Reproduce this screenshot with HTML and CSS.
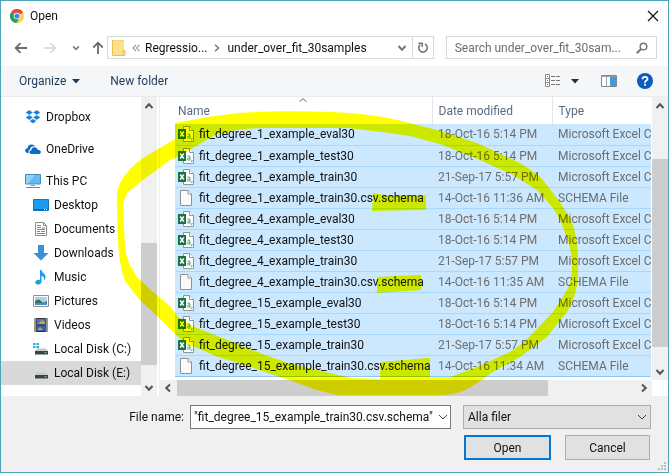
FILE: index.html
```html
<!DOCTYPE html>
<html lang="en">
<head>
<meta charset="utf-8">
<title>Open</title>
<link rel="stylesheet" href="styles.css">
</head>
<body>
<svg class="defs" aria-hidden="true">
  <symbol id="excel" viewBox="0 0 16 16">
    <path d="M5.500.5h6l4 4v11h-10z" fill="#fff" stroke="#8d9a93"/>
    <path d="M11.500.5v4h4" fill="#fff" stroke="#8d9a93"/>
    <path d="M0 3h8v10H0z" fill="#1e7145"/>
    <path d="M2.200 5.500l3.600 5M5.800 5.500l-3.600 5" stroke="#fff" stroke-width="1.500"/>
    <path d="M9.500 8.200q2.500-1 2.500 1v3.300M12 9.900q-3 0-2.700 1.600.8 1.600 2.700 0M14 12v1l-.8 1" fill="none" stroke="#5aa377"/>
  </symbol>
  <symbol id="blank" viewBox="0 0 16 16">
    <path d="M2.500.5h7.500l3.500 3.500v11.500h-11z" fill="#fafafa" stroke="#929292"/>
    <path d="M10 .5v3.500h3.500" fill="#fff" stroke="#929292"/>
  </symbol>
  <symbol id="chev" viewBox="0 0 10 10"><path d="M1.500 3 5 6.800 8.500 3" fill="none" stroke="currentColor" stroke-width="2"/></symbol>
</svg>
<div class="window">
  <header class="titlebar">
    <svg width="14" height="14" viewBox="0 0 14 14">
      <circle cx="7" cy="7" r="7" fill="#ffd23f"/>
      <path d="M7 7 .9 3.500A7 7 0 0 1 13.100 3.500z" fill="#dd4b3e"/>
      <path d="M7 7 .9 3.500A7 7 0 0 0 6.500 14L9.500 8.500z" fill="#23a05a"/>
      <circle cx="7" cy="7" r="3.300" fill="#fff"/><circle cx="7" cy="7" r="2.600" fill="#4285f4"/>
    </svg>
    <h1>Open</h1>
    <button class="icon-btn close" aria-label="Close"><svg width="12" height="12" viewBox="0 0 12 12"><path d="M1 1l10 10M11 1 1 11" stroke="#111" stroke-width="1.200"/></svg></button>
  </header>

  <nav class="navbar">
    <div class="history">
      <button class="icon-btn" aria-label="Back"><svg width="13" height="12" viewBox="0 0 13 12"><path d="M13 6H2M6.500 1.200 1.700 6l4.800 4.800" fill="none" stroke="#6b6b6b" stroke-width="1.800"/></svg></button>
      <button class="icon-btn fwd" aria-label="Forward"><svg width="13" height="12" viewBox="0 0 13 12"><path d="M0 6h11M6.500 1.200 11.300 6l-4.800 4.800" fill="none" stroke="#d5d5d5" stroke-width="1.600"/></svg></button>
      <button class="icon-btn recent" aria-label="Recent locations"><svg width="8" height="8"><use href="#chev"/></svg></button>
      <button class="icon-btn" aria-label="Up"><svg width="12" height="13" viewBox="0 0 12 13"><path d="M6 13V2M1.200 6.500 6 1.700l4.800 4.800" fill="none" stroke="#6b6b6b" stroke-width="1.800"/></svg></button>
    </div>
    <div class="address">
      <svg class="folder" width="14" height="16" viewBox="0 0 14 16"><path d="M1 0h11v11h1v4.500H1z" fill="#ffe391"/><path d="M1 0h11v10.500l-1.500 1V16H1z" fill="#ffe08a"/><path d="M1 .5h11" stroke="#f4d271"/><path d="M.5 0v15.500H13v-5h-2v5" fill="none" stroke="#e8bd52"/></svg>
      <svg width="8" height="8" viewBox="0 0 8 8"><path d="M4 .8.900 4 4 7.200M7.600.8 4.500 4l3.100 3.200" fill="none" stroke="#666"/></svg>
      <button class="crumb first">Regressio...</button>
      <svg class="sep" width="6" height="8" viewBox="0 0 6 8"><path d="M1 .8 4.500 4 1 7.200" fill="none" stroke="#777" stroke-width="1.500"/></svg>
      <button class="crumb">under_over_fit_30samples</button>
      <button class="icon-btn drop" aria-label="Previous locations"><svg width="10" height="10"><use href="#chev"/></svg></button>
      <button class="icon-btn refresh" aria-label="Refresh"><svg width="12" height="12" viewBox="0 0 12 12"><path d="M3.200 2.500A4.300 4.300 0 1 0 8 2" fill="none" stroke="#777" stroke-width="1.600"/><path d="M1.500 1.300h3.700V5" fill="none" stroke="#777" stroke-width="1.500"/></svg></button>
    </div>
    <div class="search">
      <input type="text" aria-label="Search" placeholder="Search under_over_fit_30sam...">
      <svg width="12" height="12" viewBox="0 0 12 12"><circle cx="7.500" cy="4.500" r="3.300" fill="none" stroke="#777" stroke-width="1.500"/><path d="M5 7 .8 11.200" stroke="#777" stroke-width="2"/></svg>
    </div>
  </nav>

  <div class="toolbar">
    <button class="tool organize">Organize <svg width="8" height="5"><path d="M0 0h8L4 4.500z" fill="#1e395b"/></svg></button>
    <button class="tool">New folder</button>
    <button class="icon-btn view" aria-label="Change your view"><svg width="16" height="14" viewBox="0 0 16 14"><path d="M.5.5h4v12h-4zM.5 4.500h4M.5 8.500h4" fill="#fff" stroke="#888"/><path d="M2 2.500h1M2 6.500h1M2 10.500h1" stroke="#4b7fae"/><path d="M6 2.500h4M11 2.500h4M6 6.500h4M11 6.500h4M6 10.500h4M11 10.500h4" stroke="#777"/></svg></button>
    <button class="icon-btn more" aria-label="More options"><svg width="8" height="5"><path d="M0 0h8L4 4.500z" fill="#222b45"/></svg></button>
    <button class="icon-btn preview" aria-label="Show the preview pane"><svg width="16" height="12" viewBox="0 0 16 12"><path d="M.5.5h15v11H.5z" fill="#fff" stroke="#7f868c"/><path d="M.5 1.500h15M5.500 1v10" stroke="#9aa0a5"/><path d="M9 2h6v9H9z" fill="#3a9be0"/></svg></button>
    <button class="icon-btn" aria-label="Help"><svg width="16" height="16" viewBox="0 0 16 16"><circle cx="8" cy="8" r="8" fill="#0b5cb8"/><path d="M5.500 6.200Q5.600 3.800 8 3.800t2.500 2.100C10.500 7.600 8 7.600 8 9.700M8 10.800v1.900" fill="none" stroke="#fff" stroke-width="1.800"/></svg></button>
  </div>

  <main class="content">
    <aside class="sidebar">
      <ul class="tree">
        <li class="root"><a href="#"><svg width="16" height="16" viewBox="0 0 16 16"><path d="M4.300 1 .5 3.500 4.300 6 8 3.500zM11.700 1 8 3.500 11.700 6l3.800-2.500zM4.300 6 .5 8.500 4.300 11 8 8.500zM11.700 6 8 8.500l3.700 2.500 3.800-2.500zM8 9.800l-3.500 2.300L8 14.500l3.500-2.400z" fill="#147fe0" stroke="#fff" stroke-width=".3"/></svg>Dropbox</a></li>
        <li class="root"><a href="#"><svg width="16" height="16" viewBox="0 0 16 16"><path d="M2 12Q-.5 11 .4 8.600 1 7.200 2.600 7.200 2.800 4 6 3.500q3-.3 4 1.800-4.500-.8-5.200 3.400Q3 9.500 3.700 12z" fill="#0f6cbd"/><path d="M6 13q-2-.5-1.500-2.300.4-1.200 1.700-1.200Q6.700 6 9.800 6.300q2.300.2 2.900 2.500 3 .1 3.200 2.300-.1 1.900-1.800 1.900z" fill="#0f6cbd"/></svg>OneDrive</a></li>
        <li class="root"><a href="#"><svg width="16" height="16" viewBox="0 0 16 16"><path d="M.5 1.500h15v9.500H.5z" fill="#63b9f5" stroke="#4b87b0"/><path d="M1 2h9L3 10.500H1z" fill="#92d2fb"/><path d="M6 12h4v1H6z" fill="#999"/><path d="M1 14.500h14" stroke="#888"/></svg>This PC</a></li>
        <li><a href="#"><svg width="16" height="16" viewBox="0 0 16 16"><path d="M.5 2.500h15v11H.5z" fill="#1b9cf2" stroke="#1673b8"/><path d="M1 12.500h14" stroke="#0b62a5"/><path d="M11 12.500h3" stroke="#fff" stroke-dasharray="1 1"/></svg>Desktop</a></li>
        <li><a href="#"><svg width="16" height="16" viewBox="0 0 16 16"><path d="M2.500 1.500h8l3 3v10h-11z" fill="#fff" stroke="#8a8a8a"/><path d="M10.500 1.500v3h3" fill="none" stroke="#8a8a8a"/><path d="M4 4.500h4M4 6.500h4M9 7h3M4 8.500h8M4 10.500h3M8 10.500h4M4 12.500h8" stroke="#3f93c8"/></svg>Documents</a></li>
        <li><a href="#"><svg width="16" height="16" viewBox="0 0 16 16"><path d="M5 0h6v8h4.500L8 15.500.5 8H5z" fill="#3c8fdb"/></svg>Downloads</a></li>
        <li><a href="#"><svg width="16" height="16" viewBox="0 0 16 16"><path d="M7 1h1.500c.5 3 4.500 3.500 4 7.500-.2 1.500-.8 2.500-1.500 3.200.8-3-1-4.500-2.500-5v6c0 2-2 3-4 2.800-2.300-.3-3-2-1.700-3.400C4 11 5.500 10.600 7 11z" fill="#1c9de6"/></svg>Music</a></li>
        <li><a href="#"><svg width="16" height="16" viewBox="0 0 16 16"><path d="M.5 2.500h15v11H.5z" fill="#fff" stroke="#909090"/><path d="M2 4h12v8H2z" fill="#a6d4f2"/><path d="M2 8q4-3 6 0t6 0v2H2z" fill="#3c6b70"/><path d="M2 10h12v2H2z" fill="#4a91c2"/></svg>Pictures</a></li>
        <li><a href="#"><svg width="16" height="16" viewBox="0 0 16 16"><path d="M1.500 1h13v14h-13z" fill="#333"/><path d="M4 2h8v5.500H4z" fill="#4476c8"/><path d="M4 8.500h8V14H4z" fill="#2f62b5"/><path d="M5 7l4-4 3 2v2zM4 13l3-3 3 3z" fill="#d3a13c"/><path d="M2.700 1.500v13M13.300 1.500v13" stroke="#fff" stroke-width="1.200" stroke-dasharray="1 1"/></svg>Videos</a></li>
        <li><a href="#"><svg width="16" height="16" viewBox="0 0 16 16"><path d="M0 2h2.500v2H0zM3.500 2H6v2H3.500zM0 5h2.500v2H0zM3.500 5H6v2H3.500z" fill="#1fb4da"/><path d="M4 7.500h8.500L15 10H2z" fill="#c9c9c9"/><path d="M2 10h13v3.500H2z" fill="#3c4247"/><path d="M11.500 11.700h2" stroke="#6cdb7b"/></svg>Local Disk (C:)</a></li>
        <li class="selected"><a href="#"><svg width="16" height="16" viewBox="0 0 16 16"><path d="M4 7.500h8.500L15 10H2z" fill="#c9c9c9"/><path d="M2 10h13v3.500H2z" fill="#3c4247"/><path d="M11.500 11.700h2" stroke="#6cdb7b"/></svg>Local Disk (E:)</a></li>
      </ul>
      <div class="vbar tree-bar">
        <svg class="up" width="10" height="10"><use href="#chev"/></svg>
        <div class="track"><div class="thumb"></div></div>
        <svg width="10" height="10"><use href="#chev"/></svg>
      </div>
    </aside>

    <section class="files">
      <div class="list">
        <svg class="sort" width="8" height="4" viewBox="0 0 8 4"><path d="M.5 3.700 4 .7l3.500 3" fill="none" stroke="#666"/></svg>
        <table>
          <colgroup><col class="c-name"><col class="c-date"><col class="c-type"></colgroup>
          <thead><tr><th>Name</th><th>Date modified</th><th>Type</th></tr></thead>
          <tbody>
            <tr><td><svg><use href="#excel"/></svg>fit_degree_1_example_eval30</td><td>18-Oct-16 5:14 PM</td><td>Microsoft Excel C</td></tr>
            <tr><td><svg><use href="#excel"/></svg>fit_degree_1_example_test30</td><td>18-Oct-16 5:14 PM</td><td>Microsoft Excel C</td></tr>
            <tr><td><svg><use href="#excel"/></svg>fit_degree_1_example_train30</td><td>21-Sep-17 5:57 PM</td><td>Microsoft Excel C</td></tr>
            <tr><td><svg><use href="#blank"/></svg>fit_degree_1_example_train30.csv.schema</td><td>14-Oct-16 11:36 AM</td><td>SCHEMA File</td></tr>
            <tr><td><svg><use href="#excel"/></svg>fit_degree_4_example_eval30</td><td>18-Oct-16 5:14 PM</td><td>Microsoft Excel C</td></tr>
            <tr><td><svg><use href="#excel"/></svg>fit_degree_4_example_test30</td><td>18-Oct-16 5:14 PM</td><td>Microsoft Excel C</td></tr>
            <tr><td><svg><use href="#excel"/></svg>fit_degree_4_example_train30</td><td>21-Sep-17 5:57 PM</td><td>Microsoft Excel C</td></tr>
            <tr><td><svg><use href="#blank"/></svg>fit_degree_4_example_train30.csv.schema</td><td>14-Oct-16 11:35 AM</td><td>SCHEMA File</td></tr>
            <tr><td><svg><use href="#excel"/></svg>fit_degree_15_example_eval30</td><td>18-Oct-16 5:14 PM</td><td>Microsoft Excel C</td></tr>
            <tr><td><svg><use href="#excel"/></svg>fit_degree_15_example_test30</td><td>18-Oct-16 5:14 PM</td><td>Microsoft Excel C</td></tr>
            <tr><td><svg><use href="#excel"/></svg>fit_degree_15_example_train30</td><td>21-Sep-17 5:57 PM</td><td>Microsoft Excel C</td></tr>
            <tr class="focused"><td><svg><use href="#blank"/></svg>fit_degree_15_example_train30.csv.schema</td><td>14-Oct-16 11:34 AM</td><td>SCHEMA File</td></tr>
          </tbody>
        </table>
      </div>
      <div class="vbar list-bar">
        <svg class="up" width="10" height="10"><use href="#chev"/></svg>
        <div class="track"><div class="thumb"></div></div>
        <svg width="10" height="10"><use href="#chev"/></svg>
      </div>
      <div class="hbar">
        <svg class="left" width="10" height="10"><use href="#chev"/></svg>
        <div class="track"><div class="thumb"></div></div>
        <svg class="right" width="10" height="10"><use href="#chev"/></svg>
      </div>
    </section>
  </main>

  <footer class="footer">
    <label for="filename">File name:</label>
    <div class="combo">
      <input id="filename" type="text" value="&quot;fit_degree_15_example_train30.csv.schema&quot;">
      <button class="icon-btn" aria-label="Show file names"><svg width="10" height="10" viewBox="0 0 10 10"><path d="M1 3l4 4 4-4" fill="none" stroke="#444"/></svg></button>
    </div>
    <div class="filter">
      <select aria-label="File type"><option>Alla filer</option></select>
      <svg width="10" height="10" viewBox="0 0 10 10"><path d="M1 3l4 4 4-4" fill="none" stroke="#444"/></svg>
    </div>
    <div class="actions">
      <button class="btn primary">Open</button>
      <button class="btn">Cancel</button>
    </div>
    <svg class="grip" width="8" height="8" viewBox="0 0 8 8"><path d="M6 0h2v2H6zM3 3h2v2H3zM6 3h2v2H6zM0 6h2v2H0zM3 6h2v2H3zM6 6h2v2H6z" fill="#bdbdbd"/></svg>
  </footer>

  <svg class="marker" width="669" height="473" viewBox="0 0 669 473" aria-hidden="true">
    <path fill-rule="evenodd" d="M175 123L208 117 238 113Q275 110 332 112 365 113 398 120L437 130 477 143 520 163Q535 172 543 180L560 202 570 218Q577 232 578 256L578 280Q576 296 567 312L547 337 520 357 493 372 477 383Q466 391 453 394L440 395H340Q322 393 298 383L265 372 242 364 218 357 185 343 170 329 157 316 140 300 125 281Q119 265 118 240L117 205Q116 192 120 183 128 168 143 158L170 142 175 139zM175 158L170 160 143 180 128 192Q123 200 123 210L125 245Q126 262 137 277L153 292 170 306 178 317 192 326 215 335 265 355 288 363 325 372 352 378 380 379 381 362Q400 362 418 359L430 358V377H450L477 367 510 352Q523 344 533 333L553 312 567 290Q572 281 572 265 571 245 565 233 560 218 553 208L537 190 513 175 480 160 443 145 410 136 382 132 348 128H265Q245 128 232 131L215 135 198 145z"/>
    <path d="M381 362 418 359 430 358V377L380 379zM373 193l12 2h40l1 1v14l-54 1zM377 277l44-2v15l-44 3z"/>
  </svg>
</div>
</body>
</html>
```

FILE: styles.css
```css
* { box-sizing: border-box; }
body { margin: 0; font: 12px/16px Roboto, "Open Sans", sans-serif; color: #111; }
button, input, select { font: inherit; color: inherit; margin: 0; border-radius: 0; outline: 0; }
svg { display: block; flex: none; }
.defs { position: absolute; width: 0; height: 0; }

.window { position: relative; isolation: isolate; display: flex; flex-direction: column; height: 100vh; background: #fff; border: 1px solid #4aa5bb; }
.icon-btn { display: flex; align-items: center; justify-content: center; padding: 0; border: 0; background: none; color: #777; }

.titlebar { display: flex; align-items: center; gap: 6px; height: 29px; padding: 0 8px 0 9px; }
.titlebar h1 { margin: 0; font-size: 12px; font-weight: 400; }
.close { margin-left: auto; width: 14px; }

.navbar { display: flex; align-items: stretch; height: 36px; padding: 6px 11px 7px 13px; }
.history { display: flex; align-items: center; width: 93px; }
.fwd { margin-left: 17px; }
.recent { margin: 0 12px 0 15px; }
.address { display: flex; align-items: center; flex: 335; min-width: 0; border: 1px solid #d9d9d9; padding-left: 4px; }
.folder { margin-right: 6px; }
.crumb { padding: 0; border: 0; background: none; white-space: nowrap; }
.first { margin-left: 5px; }
.sep { margin: 0 7px; }
.drop { margin-left: auto; width: 19px; }
.refresh { align-self: stretch; width: 21px; border-left: 1px solid #d9d9d9; }
.search { display: flex; align-items: center; flex: 202; min-width: 0; margin-left: 12px; padding: 0 8px; border: 1px solid #d9d9d9; }
.search input { flex: 1; min-width: 0; padding: 0; border: 0; background: none; }
.search input::placeholder { color: #6d6d6d; opacity: 1; }

.toolbar { display: flex; align-items: center; height: 31px; padding: 0 15px 0 18px; background: #f5f6f7; border-bottom: 1px solid #e8eaec; }
.tool { display: flex; align-items: center; gap: 6px; padding: 0; border: 0; background: none; color: #1e395b; }
.organize { margin-right: 30px; }
.view { margin-left: auto; }
.more { margin: 0 22px 0 10px; }
.preview { margin-right: 20px; }

.content { display: flex; flex: 1; min-height: 0; }
.sidebar { display: flex; flex: none; width: 159px; border-right: 1px solid #eee; }
.tree { flex: 1; margin: 0; padding: 8px 0 0; list-style: none; overflow: hidden; }
.tree a { display: flex; align-items: center; gap: 5px; height: 24px; padding-left: 32px; color: inherit; text-decoration: none; white-space: nowrap; }
.tree .root a { padding-left: 24px; }
.root + .root { margin-top: 8px; }
.selected { background: #d9d9d9; }

.vbar { display: flex; flex-direction: column; align-items: center; justify-content: space-between; width: 16px; padding: 4px 0 3px; background: #f0f0f0; color: #555; }
.track { display: flex; flex: 1; }
.vbar .track { flex-direction: column; width: 100%; margin: 4px 0 3px; }
.thumb { background: #cdcdcd; }
.up { transform: rotate(180deg); }
.tree-bar { margin-right: 2px; }
.tree-bar .thumb { margin-top: 128px; height: 122px; }
.list-bar .thumb { margin-top: 44px; height: 188px; }

.files { display: grid; flex: 1; grid-template: minmax(0, 1fr) 16px / minmax(0, 1fr) 16px; min-width: 0; }
.list { position: relative; overflow: hidden; padding: 0 1px 0 15px; }
.sort { position: absolute; left: 139px; top: 1px; }
table { width: 100%; border-collapse: collapse; table-layout: fixed; }
.c-name { width: 257px; }
.c-date { width: 120px; }
th { height: 27px; padding: 0 6px; font-weight: 400; text-align: left; color: #5b6b83; border-right: 1px solid #e5e5e5; }
th:first-child { padding-left: 3px; }
th:last-child { border: 0; }
td { height: 21px; padding: 0 6px; overflow: hidden; white-space: nowrap; color: #6d6d6d; background: #cce8ff; border-bottom: 1px solid #a9d8fc; }
td:first-child { padding-left: 3px; color: #111; }
td:last-child { padding-right: 0; }
td svg { float: left; width: 16px; height: 16px; margin-right: 5px; }
.focused td { border-top: 1px solid #8cc8f8; border-bottom-color: #8cc8f8; }
.hbar { display: flex; align-items: center; padding: 0 3px; background: #f0f0f0; color: #555; }
.hbar .track { height: 100%; margin: 0 4px; }
.hbar .thumb { flex: 0 0 81%; }
.left { transform: rotate(90deg); }
.right { transform: rotate(-90deg); }

.footer { position: relative; display: grid; grid-template-columns: 183px minmax(0, 267fr) minmax(0, 188fr); grid-template-rows: 24px 25px; gap: 6px; height: 76px; padding: 9px 17px 12px 0; background: #f0f0f0; }
.footer label { align-self: center; text-align: right; }
.combo { display: flex; border: 1px solid #777; background: #fff; margin-right: 6px; }
.combo input { flex: 1; min-width: 0; padding: 0 0 0 3px; border: 0; background: none; }
.combo button { width: 14px; }
.filter { display: grid; align-items: center; }
.filter select, .filter svg { grid-area: 1 / 1; }
.filter select { appearance: none; width: 100%; height: 24px; padding: 0 4px; border: 1px solid #adadad; background: #e1e1e1; }
.filter svg { justify-self: end; margin-right: 4px; pointer-events: none; }
.actions { grid-column: 3; display: flex; gap: 14px; padding: 0 1px; }
.btn { flex: 1; padding: 0; border: 1px solid #adadad; background: #e1e1e1; }
.primary { border: 2px solid #0078d7; }
.grip { position: absolute; right: 2px; bottom: 2px; }

.marker { position: absolute; left: -1px; top: -1px; fill: #ff0; mix-blend-mode: multiply; pointer-events: none; }
```
